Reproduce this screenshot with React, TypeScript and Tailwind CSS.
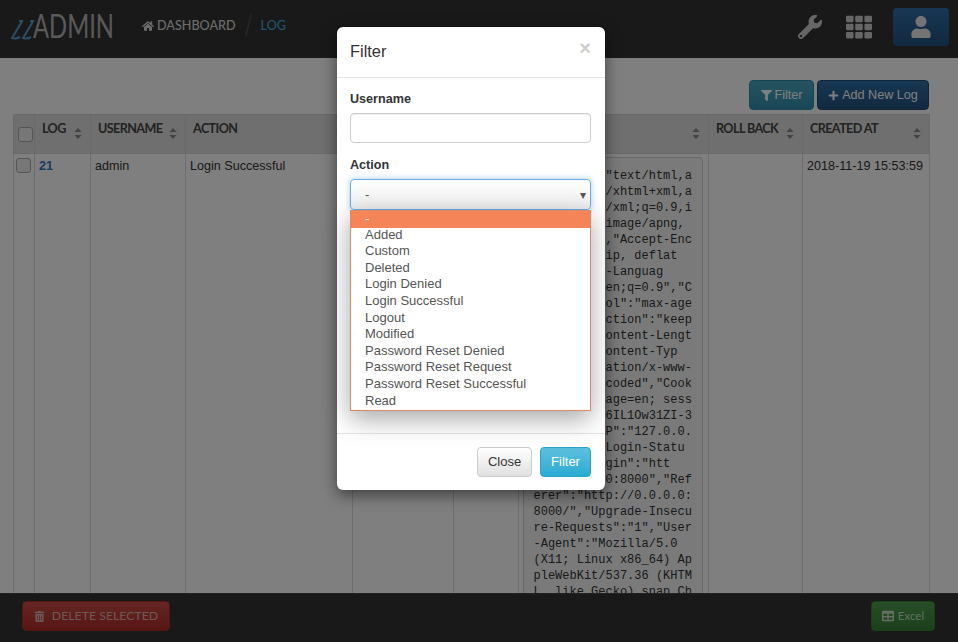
import { FaFilter, FaHome, FaPlus, FaTable, FaTh, FaTrashAlt, FaUser, FaWrench } from 'react-icons/fa';

const columns = [
  { label: '', width: 'w-[21px]' },
  { label: 'LOG', width: 'w-[56px]' },
  { label: 'USERNAME', width: 'w-[95px]' },
  { label: 'ACTION', width: 'w-[167px]' },
  { label: 'TABLE NAME', width: 'w-[101px]' },
  { label: 'ID', width: 'w-[65px]' },
  { label: 'ACTIVITY', width: 'w-[190px]' },
  { label: 'ROLL BACK', width: 'w-[94px]' },
  { label: 'CREATED AT', width: 'w-[127px]' },
];

const activityLines = [
  '{"Accept":"text/html,a',
  'pplication/xhtml+xml,a',
  'pplication/xml;q=0.9,i',
  'mage/webp,image/apng,',
  '*/*;q=0.8","Accept-Enc',
  'oding":"gzip, deflat',
  'e","Accept-Languag',
  'e":"en-US,en;q=0.9","C',
  'ache-Control":"max-age',
  '=0","Connection":"keep',
  '-alive","Content-Lengt',
  'h":"43","Content-Typ',
  'e":"application/x-www-',
  'form-urlencoded","Cook',
  'ie":"language=en; sess',
  'ion=kPx9Qd6IL1Ow31ZI-3',
  'Zd8Qm3","IP":"127.0.0.',
  '1","XAuth-Login-Statu',
  's":"","Origin":"htt',
  'p://0.0.0.0:8000","Ref',
  'erer":"http://0.0.0.0:',
  '8000/","Upgrade-Insecu',
  're-Requests":"1","User',
  '-Agent":"Mozilla/5.0',
  '(X11; Linux x86_64) Ap',
  'pleWebKit/537.36 (KHTM',
  'L, like Gecko) snap Ch',
  'romium/70.0.3538.77',
];

const actions = [
  'Added',
  'Custom',
  'Deleted',
  'Login Denied',
  'Login Successful',
  'Logout',
  'Modified',
  'Password Reset Denied',
  'Password Reset Request',
  'Password Reset Successful',
  'Read',
];

function SortIcon() {
  return (
    <svg viewBox="0 0 8 11" className="mt-[7px] h-[11px] w-2 shrink-0 fill-[#888]">
      <path d="M4 0 7.6 4H.4zM4 11 .4 7h7.2z" />
    </svg>
  );
}

function Checkbox() {
  return <span className="block h-[15px] w-[15px] rounded-[3px] border border-[#aaa] bg-[#eee]" />;
}

function TopBar() {
  return (
    <header className="flex h-[58px] shrink-0 items-start bg-[#333] font-['Lato',sans-serif]">
      <div className="mt-[8px] ml-[11px] flex h-[34px] w-[122px] items-center">
        <svg viewBox="0 0 24 20" className="mt-[9px] h-[20px] w-[24px] shrink-0 fill-none stroke-[#4f9fd0] stroke-2">
          <path d="M8 1h3C8 7 4 13 1 18c3 1 6 0 8-1M19 1h3c-3 6-7 12-10 17 3 1 6 0 8-1" />
        </svg>
        <span className="-ml-[2px] origin-left scale-x-[0.72] text-[33px] leading-none font-normal whitespace-nowrap text-[#b4b4b4]">
          ADMIN
        </span>
      </div>
      <a className="mt-[18px] ml-[9px] flex items-center gap-[3px] text-[12.6px] leading-[16px] font-medium text-[#d8d8d8]">
        <FaHome className="text-[12px]" /> DASHBOARD
      </a>
      <span className="mx-[12px] mt-[14px] h-[22px] w-px rotate-[14deg] bg-[#555]" />
      <a className="mt-[18px] text-[12.6px] leading-[16px] font-medium text-[#45a5d6]">LOG</a>
      <div className="mt-[8px] ml-auto flex h-[38px] items-center">
        <FaWrench className="mr-[24px] text-[24px] text-[#ccc]" />
        <FaTh className="mr-[21px] text-[26px] text-[#ccc]" />
        <button className="mr-[9px] flex h-[38px] w-[56px] items-center justify-center rounded-[4px] bg-gradient-to-b from-[#2f6fa6] to-[#235280] text-[#e8e8e8]">
          <FaUser className="text-[22px]" />
        </button>
      </div>
    </header>
  );
}

function LogTable() {
  return (
    <table className="w-[916px] table-fixed border-collapse text-[12.6px] text-[#333]">
      <thead>
        <tr className="h-[39px] bg-[#dedede]">
          {columns.map((col, i) => (
            <th key={i} className={`${col.width} border border-[#d4d4d4] align-top`}>
              {i === 0 ? (
                <div className="pt-[12px] pl-[4px]">
                  <Checkbox />
                </div>
              ) : (
                <div className="flex justify-between pt-[6px] pr-[8px] pl-[7px] text-left font-['Lato',sans-serif] text-[12.6px] leading-[16px] font-bold tracking-[-0.6px] text-[#444]">
                  <span className="whitespace-nowrap">{col.label}</span>
                  <SortIcon />
                </div>
              )}
            </th>
          ))}
        </tr>
      </thead>
      <tbody>
        <tr className="align-top">
          <td className="border border-[#ddd] pt-[4px] pl-[2px]">
            <Checkbox />
          </td>
          <td className="border border-[#ddd] pt-[3px] pl-[4px] font-bold text-[#337ab7]">21</td>
          <td className="border border-[#ddd] pt-[3px] pl-[4px]">admin</td>
          <td className="border border-[#ddd] pt-[3px] pl-[4px]">Login Successful</td>
          <td className="border border-[#ddd]" />
          <td className="border border-[#ddd]" />
          <td className="border border-[#ddd] pt-[3px] pl-[4px]">
            <pre className="w-[180px] rounded-[4px] border border-[#ccc] bg-[#f5f5f5] p-[9.5px] font-['Liberation_Mono',monospace] text-[12px] leading-[16px] text-[#333]">
              {activityLines.join('\n')}
            </pre>
          </td>
          <td className="border border-[#ddd]" />
          <td className="border border-[#ddd] pt-[3px] pl-[4px] whitespace-nowrap">2018-11-19 15:53:59</td>
        </tr>
      </tbody>
    </table>
  );
}

function FilterModal() {
  return (
    <div className="absolute top-[27px] left-[337px] h-[463px] w-[268px] rounded-[6px] bg-white font-['Liberation_Sans',sans-serif] text-[13px] text-[#333] shadow-[0_5px_15px_rgba(0,0,0,0.5)]">
      <div className="flex h-[51px] items-center justify-between border-b border-[#e5e5e5] pr-[14px] pl-[13px]">
        <h4 className="-mt-[2px] text-[16.4px]">Filter</h4>
        <span className="-mt-[9px] text-[20px] leading-none font-bold text-[#cfcfcf]">×</span>
      </div>
      <div className="relative h-[355px] px-[13px] pt-[13px]">
        <label className="block text-[12.6px] leading-[16px] font-bold">Username</label>
        <input className="mt-[6px] block h-[30px] w-[241px] rounded-[4px] border border-[#ccc] shadow-[inset_0_1px_1px_rgba(0,0,0,0.075)]" />
        <label className="mt-[14px] block text-[12.6px] leading-[16px] font-bold">Action</label>
        <div className="relative mt-[6px] w-[241px]">
          <div className="flex h-[31px] items-center justify-between rounded-[4px] border border-[#66afe9] bg-gradient-to-b from-white to-[#eeeeee] pr-[4px] pl-[14px] text-[#555] shadow-[0_0_6px_rgba(102,175,233,0.6)]">
            <span>-</span>
            <span className="text-[12px] leading-none text-[#555]">▾</span>
          </div>
          <ul className="absolute top-[31px] left-0 w-[241px] border border-[#e0876a] bg-white pb-px leading-[16.6px] text-[#555] shadow-[0_8px_24px_rgba(0,0,0,0.35)]">
            <li className="h-[17px] bg-[#f58559] pl-[14px] text-white">-</li>
            {actions.map((action, i) => (
              <li key={action} className={i === 0 ? '-mt-[1.4px] pl-[14px]' : 'pl-[14px]'}>
                {action}
              </li>
            ))}
          </ul>
        </div>
      </div>
      <div className="flex justify-end gap-2 border-t border-[#e5e5e5] px-[14px] pt-[13px]">
        <button className="h-[30px] w-[55px] rounded-[4px] border border-[#ccc] bg-gradient-to-b from-white to-[#e0e0e0] text-[#333]">
          Close
        </button>
        <button className="h-[30px] w-[51px] rounded-[4px] border border-[#28a4c9] bg-gradient-to-b from-[#5bc0de] to-[#2aabd2] text-white">
          Filter
        </button>
      </div>
    </div>
  );
}

export default function App() {
  return (
    <div className="relative flex h-screen flex-col overflow-hidden bg-white font-['Liberation_Sans',sans-serif]">
      <TopBar />
      <main className="min-h-0 flex-1 overflow-hidden px-[13px] pt-[22px]">
        <div className="mr-[16px] flex justify-end gap-[3px]">
          <button className="flex h-[30px] w-[65px] items-center justify-center gap-[3px] rounded-[4px] border border-[#2f8fae] bg-gradient-to-b from-[#4fa8c2] to-[#2f8fae] text-[12.6px] text-white">
            <FaFilter className="text-[11px]" /> Filter
          </button>
          <button className="flex h-[30px] w-[112px] items-center justify-center gap-[3px] rounded-[4px] border border-[#204a70] bg-gradient-to-b from-[#2f6fa6] to-[#235280] text-[12.6px] text-white">
            <FaPlus className="text-[11px]" /> Add New Log
          </button>
        </div>
        <div className="mt-[4px]">
          <LogTable />
        </div>
      </main>
      <footer className="flex h-[49px] shrink-0 items-start justify-between border-t border-[#444] bg-[#333] pt-[7px] pr-[23px] pl-[22px] font-['Lato',sans-serif]">
        <button className="flex h-[30px] w-[148px] items-center justify-center gap-[7px] rounded-[4px] border border-[#a82a26] bg-gradient-to-b from-[#c94c48] to-[#b02a26] text-[12.3px] text-[#d8b0b0]">
          <FaTrashAlt className="text-[11px]" /> DELETE SELECTED
        </button>
        <button className="flex h-[30px] w-[64px] items-center justify-center gap-[4px] rounded-[4px] border border-[#367f36] bg-gradient-to-b from-[#4f9e4f] to-[#378037] text-[11.5px] text-[#c8dcc8]">
          <FaTable className="text-[12px]" /> Excel
        </button>
      </footer>
      <div className="absolute inset-0 bg-black/50" />
      <FilterModal />
    </div>
  );
}
